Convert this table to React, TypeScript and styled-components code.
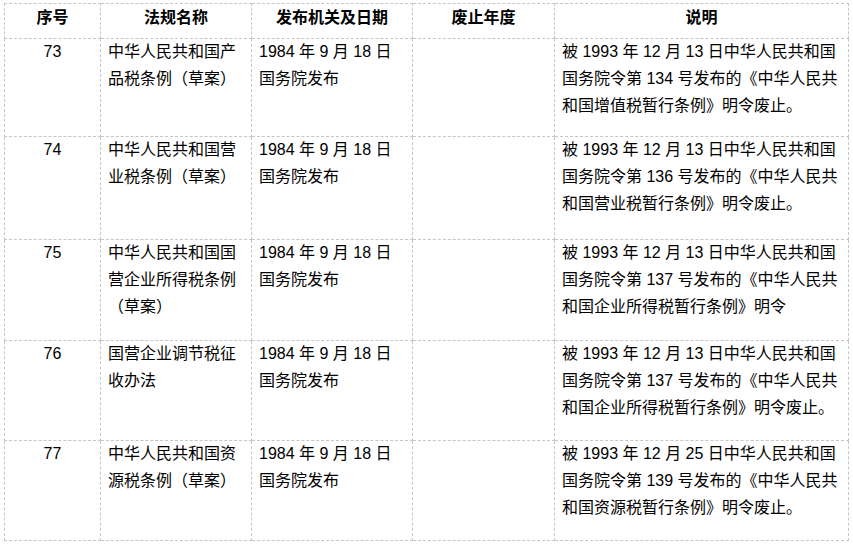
import styled, {createGlobalStyle} from 'styled-components';

const GlobalStyle = createGlobalStyle`
    html, body {
        margin: 0;
        padding: 0;
        background: #fff;
    }

    body {
        font-family: "Liberation Sans", "Noto Sans CJK SC", sans-serif;
        color: #000;
        text-spacing-trim: space-all;
        font-feature-settings: "chws" 0, "halt" 0, "palt" 0;
        font-kerning: none;
    }
`;

type Row = {
    no: number;
    name: string[];
    issued: string[];
    repealed: string;
    note: string[];
    height: number;
};

const ISSUED = ['1984 年 9 月 18 日', '国务院发布'];

const rows: Row[] = [
    {
        no: 73,
        name: ['中华人民共和国产', '品税条例（草案）'],
        issued: ISSUED,
        repealed: '',
        note: ['被 1993 年 12 月 13 日中华人民共和国', '国务院令第 134 号发布的《中华人民共', '和国增值税暂行条例》明令废止。'],
        height: 98,
    },
    {
        no: 74,
        name: ['中华人民共和国营', '业税条例（草案）'],
        issued: ISSUED,
        repealed: '',
        note: ['被 1993 年 12 月 13 日中华人民共和国', '国务院令第 136 号发布的《中华人民共', '和国营业税暂行条例》明令废止。'],
        height: 103,
    },
    {
        no: 75,
        name: ['中华人民共和国国', '营企业所得税条例', '（草案）'],
        issued: ISSUED,
        repealed: '',
        note: ['被 1993 年 12 月 13 日中华人民共和国', '国务院令第 137 号发布的《中华人民共', '和国企业所得税暂行条例》明令'],
        height: 101,
    },
    {
        no: 76,
        name: ['国营企业调节税征', '收办法'],
        issued: ISSUED,
        repealed: '',
        note: ['被 1993 年 12 月 13 日中华人民共和国', '国务院令第 137 号发布的《中华人民共', '和国企业所得税暂行条例》明令废止。'],
        height: 100,
    },
    {
        no: 77,
        name: ['中华人民共和国资', '源税条例（草案）'],
        issued: ISSUED,
        repealed: '',
        note: ['被 1993 年 12 月 25 日中华人民共和国', '国务院令第 139 号发布的《中华人民共', '和国资源税暂行条例》明令废止。'],
        height: 100,
    },
];

const Lines = ({lines}: {lines: string[]}) => (
    <StyledText>
        {lines.map((l, i) => (
            <StyledLine key={i}>{l}</StyledLine>
        ))}
    </StyledText>
);

const App = () => (
    <>
        <GlobalStyle />
        <StyledPage>
            <StyledTable>
                <colgroup>
                    <col style={{width: 96}} />
                    <col style={{width: 151}} />
                    <col style={{width: 161}} />
                    <col style={{width: 142}} />
                    <col style={{width: 294}} />
                </colgroup>
                <thead>
                    <StyledRow $h={34}>
                        <StyledTh>序号</StyledTh>
                        <StyledTh>法规名称</StyledTh>
                        <StyledTh>发布机关及日期</StyledTh>
                        <StyledTh>废止年度</StyledTh>
                        <StyledTh>说明</StyledTh>
                    </StyledRow>
                </thead>
                <tbody>
                    {rows.map((r) => (
                        <StyledRow key={r.no} $h={r.height}>
                            <StyledTd $center><Lines lines={[String(r.no)]} /></StyledTd>
                            <StyledTd><Lines lines={r.name} /></StyledTd>
                            <StyledTd><Lines lines={r.issued} /></StyledTd>
                            <StyledTd>{r.repealed}</StyledTd>
                            <StyledTd><Lines lines={r.note} /></StyledTd>
                        </StyledRow>
                    ))}
                </tbody>
            </StyledTable>
        </StyledPage>
    </>
);

export default App;

const StyledPage = styled.div`
    padding: 3px 0 0 4px;
`;

const StyledTable = styled.table`
    width: 844px;
    border-collapse: collapse;
    table-layout: fixed;
    font-size: 16px;
    line-height: 27px;
`;

const StyledRow = styled.tr<{$h: number}>`
    height: ${(p) => p.$h}px;
`;

const StyledTh = styled.th`
    padding: 0 0 7px;
    border: 1px dashed #c6c6c6;
    font-weight: 700;
    text-align: center;
    vertical-align: top;
    white-space: nowrap;
`;

const StyledTd = styled.td<{$center?: boolean}>`
    padding: 0 0 0 ${(p) => (p.$center ? 0 : 7)}px;
    border: 1px dashed #c6c6c6;
    text-align: ${(p) => (p.$center ? 'center' : 'left')};
    vertical-align: top;
    white-space: nowrap;
    overflow: hidden;
`;

const StyledText = styled.div`
    margin-top: -1px;
`;

const StyledLine = styled.span`
    display: block;
`;
